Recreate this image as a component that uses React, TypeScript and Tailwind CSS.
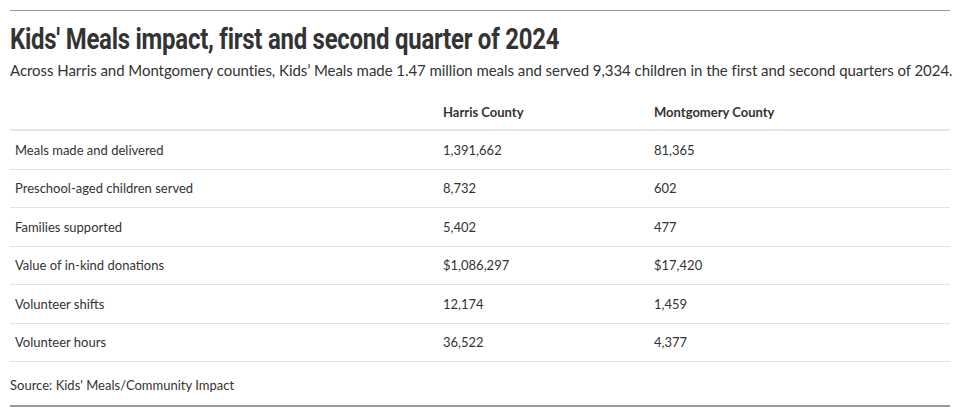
import React from "react";

const rows: [string, string, string][] = [
  ["Meals made and delivered", "1,391,662", "81,365"],
  ["Preschool-aged children served", "8,732", "602"],
  ["Families supported", "5,402", "477"],
  ["Value of in-kind donations", "$1,086,297", "$17,420"],
  ["Volunteer shifts", "12,174", "1,459"],
  ["Volunteer hours", "36,522", "4,377"],
];

export default function App() {
  return (
    <div className="w-[960px] h-[417px] bg-white px-[10px] pt-[10px] text-[#333] font-['Lato',sans-serif]">
      <div className="border-t border-[#999]" />
      <h1 className="mt-[12px] h-[32px] font-['Roboto',sans-serif] font-bold text-[29px] leading-[32px] text-[#333] tracking-[-0.3px] origin-left scale-x-[0.826] whitespace-nowrap">
        Kids' Meals impact, first and second quarter of 2024
      </h1>
      <p className="mt-[3px] text-[15px] leading-[24px] text-[#333] whitespace-nowrap tracking-[-0.05px]">
        Across Harris and Montgomery counties, Kids’ Meals made 1.47 million meals and served 9,334 children in the first and second quarters of 2024.
      </p>
      <div className="mt-[9px] grid grid-cols-[428px_211px_301px] text-[13px] leading-[18px]">
        <div className="h-[40px] border-b-2 border-[#e6e6e6]" />
        <div className="h-[40px] border-b-2 border-[#e6e6e6] px-[5px] pt-[12px] font-bold">Harris County</div>
        <div className="h-[40px] border-b-2 border-[#e6e6e6] px-[5px] pt-[12px] font-bold">Montgomery County</div>
        {rows.map((r, i) => (
          <React.Fragment key={i}>
            {r.map((c, j) => (
              <div key={j} className="h-[38.5px] border-b border-[#e3e3e3] px-[5px] flex items-center">
                {c}
              </div>
            ))}
          </React.Fragment>
        ))}
      </div>
      <div className="h-[45px] flex items-center text-[13px] leading-[18px] border-b-2 border-[#999] pt-[2px]">
        Source: Kids' Meals/Community Impact
      </div>
    </div>
  );
}
